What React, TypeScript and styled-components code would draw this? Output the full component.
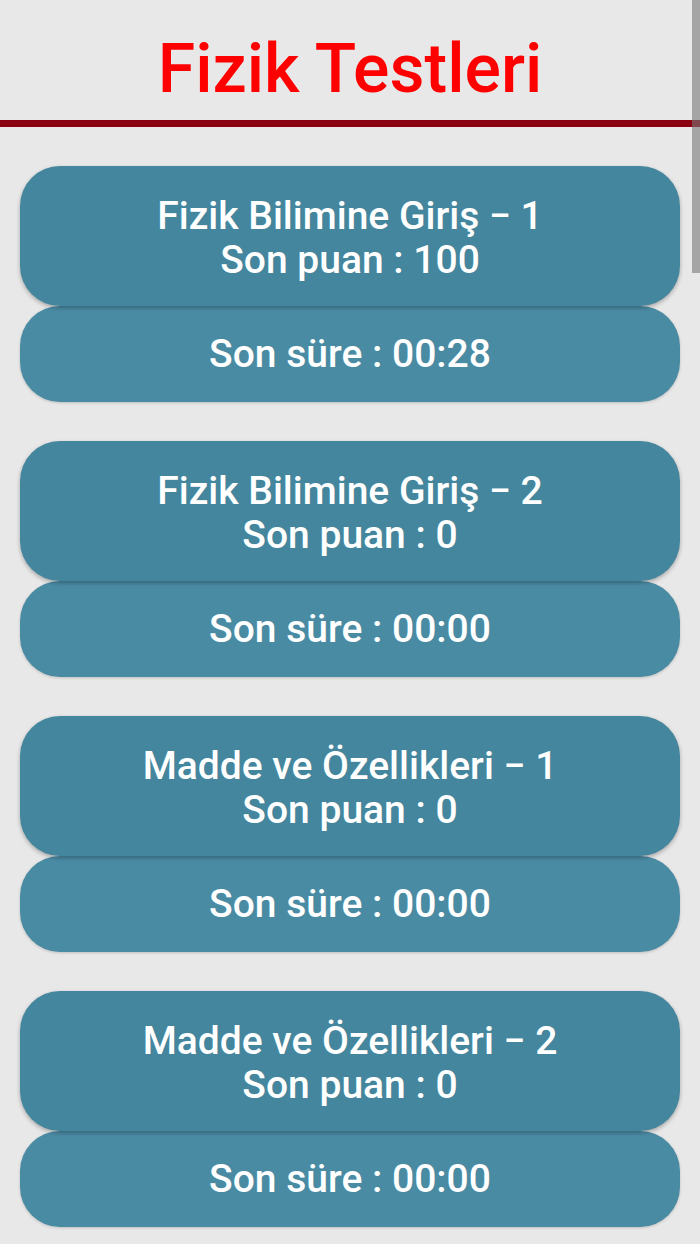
import React from "react";
import styled, { createGlobalStyle } from "styled-components";

const Global = createGlobalStyle`
  html, body { margin: 0; padding: 0; background: #e8e8e8; }
  body { font-family: Roboto, "Noto Sans", "Liberation Sans", sans-serif; }
`;

const Page = styled.div`
  position: relative;
  width: 700px;
  min-height: 1244px;
  background: #e8e8e8;
  overflow: hidden;
`;

const Header = styled.header`
  height: 120px;
  box-sizing: border-box;
  padding-top: 29px;
  display: flex;
  justify-content: center;
  align-items: flex-start;
`;

const Title = styled.h1`
  margin: 0;
  font-family: Roboto, sans-serif;
  font-weight: 500;
  font-size: 68px;
  line-height: normal;
  color: #ff0000;
`;

const Rule = styled.div`
  height: 7px;
  background: #8b0010;
`;

const List = styled.main`
  display: flex;
  flex-direction: column;
  gap: 39px;
  padding: 39px 20px;
`;

const Group = styled.section`
  display: flex;
  flex-direction: column;
`;

const Card = styled.div<{ $part: "top" | "bottom" }>`
  position: relative;
  z-index: ${(p) => (p.$part === "top" ? 2 : 1)};
  box-sizing: border-box;
  height: ${(p) => (p.$part === "top" ? 140 : 96)}px;
  padding-top: ${(p) => (p.$part === "top" ? 4 : 0)}px;
  border-radius: 40px;
  background: ${(p) => (p.$part === "top" ? "#44869d" : "#4a8ba4")};
  box-shadow: ${(p) =>
    p.$part === "top"
      ? "0 2px 4px rgba(0,0,0,0.28)"
      : "0 1px 3px rgba(0,0,0,0.18)"};
  display: flex;
  flex-direction: column;
  justify-content: center;
  align-items: center;
  color: #ffffff;
  font-family: Roboto, sans-serif;
  font-weight: 500;
  font-size: 39px;
  line-height: 44px;
  text-align: center;
`;

const Line = styled.div``;

const Scrollbar = styled.div`
  position: absolute;
  top: 0;
  right: 0;
  width: 8px;
  height: 273px;
  background: rgba(120, 120, 120, 0.6);
`;

const tests = [
  { name: "Fizik Bilimine Giriş − 1", score: 100, time: "00:28" },
  { name: "Fizik Bilimine Giriş − 2", score: 0, time: "00:00" },
  { name: "Madde ve Özellikleri − 1", score: 0, time: "00:00" },
  { name: "Madde ve Özellikleri − 2", score: 0, time: "00:00" },
];

export default function App() {
  return (
    <Page>
      <Global />
      <Header>
        <Title>Fizik Testleri</Title>
      </Header>
      <Rule />
      <List>
        {tests.map((t) => (
          <Group key={t.name}>
            <Card $part="top">
              <Line>{t.name}</Line>
              <Line>Son puan : {t.score}</Line>
            </Card>
            <Card $part="bottom">
              <Line>Son süre : {t.time}</Line>
            </Card>
          </Group>
        ))}
      </List>
      <Scrollbar />
    </Page>
  );
}
